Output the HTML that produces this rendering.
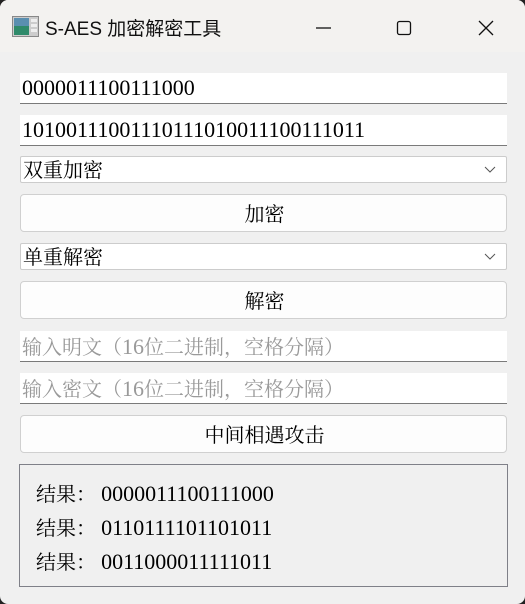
<html><head><style>
body{margin:0;width:525px;height:604px;background:#222;overflow:hidden;font-family:"Noto Serif CJK SC","Liberation Serif",serif;}
.win{position:absolute;left:0;top:0;width:525px;height:604px;background:#f0f0f0;border-radius:8px;overflow:hidden}
.tb{position:absolute;left:0;top:0;width:525px;height:52px;background:#f3f2f0}
.t{position:absolute;left:45px;top:14px;font-family:"Liberation Sans","Noto Sans CJK SC",sans-serif;font-size:19px;color:#111}
.e{position:absolute;left:20px;width:487px;box-sizing:border-box;background:#fff;font-size:20px;color:#000;padding-left:2px;white-space:nowrap;overflow:hidden}
.d{font-family:"Liberation Serif",serif;font-size:22px}
.in{height:31px;border-bottom:1px solid #7a7a7a;line-height:30px}
.cb{height:27px;border:1px solid #ccc;line-height:24px;border-radius:2px}
.bt{height:38px;border:1px solid #d0d0d0;border-radius:4px;text-align:center;line-height:35px;background:#fdfdfd}
.ph{color:#9a9a9a}
.r{position:absolute;left:19px;top:464px;width:489px;height:123px;box-sizing:border-box;border:1px solid #7f8088;font-size:20px;line-height:33px;padding:11px 0 0 16px}
.ar{position:absolute;right:10px;top:9px}
</style></head><body><div class="win">
<div class="tb">
<svg style="position:absolute;left:12px;top:16px" width="28" height="22"><rect x="0.5" y="0.5" width="26" height="20" fill="#ccc" stroke="#888"/><rect x="2" y="2" width="15" height="17" fill="#2f8a6a"/><rect x="2" y="2" width="15" height="8" fill="#5a8fb0"/><rect x="19" y="3" width="6" height="3" fill="#eee"/><rect x="19" y="8" width="6" height="3" fill="#eee"/><rect x="19" y="13" width="6" height="3" fill="#eee"/></svg>
<div class="t">S-AES 加密解密工具</div>
<svg style="position:absolute;left:315px;top:20px" width="200" height="16"><line x1="1" y1="8" x2="16" y2="8" stroke="#111" stroke-width="1.3"/><rect x="82.5" y="1.5" width="13" height="13" rx="2" fill="none" stroke="#111" stroke-width="1.3"/><path d="M164 1L178 15M178 1L164 15" stroke="#111" stroke-width="1.3"/></svg>
</div>
<div class="e in" style="top:73px"><span class="d">0000011100111000</span></div>
<div class="e in" style="top:115px"><span class="d">10100111001110111010011100111011</span></div>
<div class="e cb" style="top:156px">双重加密<svg class="ar" width="12" height="8"><path d="M1 1L6 6L11 1" fill="none" stroke="#555"/></svg></div>
<div class="e bt" style="top:194px">加密</div>
<div class="e cb" style="top:243px">单重解密<svg class="ar" width="12" height="8"><path d="M1 1L6 6L11 1" fill="none" stroke="#555"/></svg></div>
<div class="e bt" style="top:281px">解密</div>
<div class="e in ph" style="top:331px">输入明文（<span class="d">16</span>位二进制，空格分隔）</div>
<div class="e in ph" style="top:373px">输入密文（<span class="d">16</span>位二进制，空格分隔）</div>
<div class="e bt" style="top:415px">中间相遇攻击</div>
<div class="r">结果：&nbsp;<span class="d">0000011100111000</span><br>结果：&nbsp;<span class="d">0110111101101011</span><br>结果：&nbsp;<span class="d">0011000011111011</span></div>
</div></body></html>
